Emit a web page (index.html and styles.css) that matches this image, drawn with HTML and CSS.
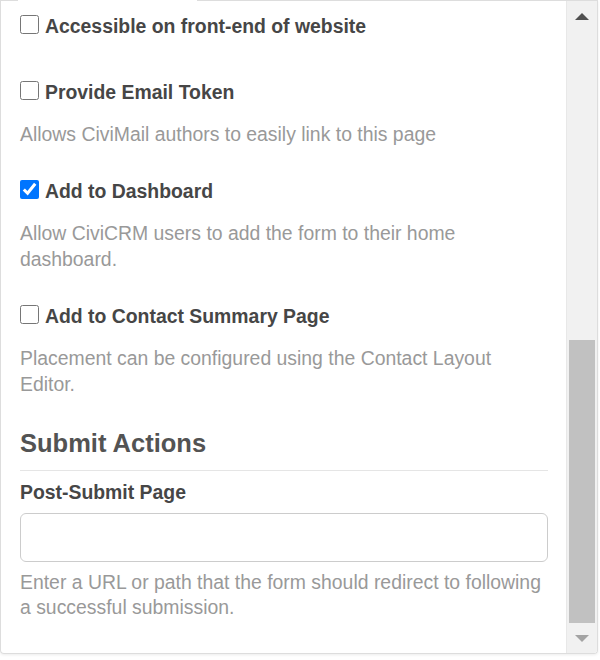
FILE: index.html
```html
<!DOCTYPE html>
<html lang="en">
<head>
<meta charset="utf-8">
<title>Form settings</title>
<link rel="stylesheet" href="styles.css">
</head>
<body>
<div class="panel">
  <div class="top-edge"><span class="edge-a"></span><span class="edge-gap"></span><span class="edge-b"></span></div>
  <div class="panel-body">
    <div class="content">
      <div class="group group-plain">
        <label class="check"><input type="checkbox"> Accessible on front-end of website</label>
      </div>
      <div class="group">
        <label class="check"><input type="checkbox"> Provide Email Token</label>
        <p class="help">Allows CiviMail authors to easily link to this page</p>
      </div>
      <div class="group">
        <label class="check"><input type="checkbox" checked> Add to Dashboard</label>
        <p class="help">Allow CiviCRM users to add the form to their home dashboard.</p>
      </div>
      <div class="group">
        <label class="check"><input type="checkbox"> Add to Contact Summary Page</label>
        <p class="help">Placement can be configured using the Contact Layout Editor.</p>
      </div>
      <h3 class="section-title">Submit Actions</h3>
      <div class="field">
        <label class="field-label" for="redirect">Post-Submit Page</label>
        <input class="text-input" id="redirect" type="text">
        <p class="help help-tight">Enter a URL or path that the form should redirect to following a successful submission.</p>
      </div>
    </div>
    <div class="scrollbar">
      <div class="arrow arrow-up"></div>
      <div class="track">
        <div class="thumb"></div>
      </div>
      <div class="arrow arrow-down"></div>
    </div>
  </div>
</div>
</body>
</html>
```

FILE: styles.css
```css
html, body {
  margin: 0;
  padding: 0;
  background: #ffffff;
}

body {
  font-family: "Liberation Sans", Arial, sans-serif;
  width: 600px;
  height: 660px;
}

.panel {
  width: 598px;
  height: 654px;
  box-sizing: border-box;
  border: 1px solid #dddddd;
  border-top: none;
  border-radius: 0 0 4px 4px;
  box-shadow: 0 1px 3px rgba(0, 0, 0, 0.08);
  display: flex;
  flex-direction: column;
  overflow: hidden;
}

.top-edge {
  display: flex;
  height: 1px;
  flex: 0 0 1px;
}

.edge-a {
  width: 17px;
  background: #dddddd;
}

.edge-gap {
  width: 179px;
}

.edge-b {
  flex: 1;
  background: #dddddd;
}

.panel-body {
  flex: 1;
  display: flex;
  min-height: 0;
}

.content {
  flex: 1;
  padding: 12px 18px 0 19px;
  min-width: 0;
}

.group {
  margin-bottom: 31px;
}

.group-plain {
  margin-bottom: 40px;
}

.check {
  display: flex;
  align-items: center;
  gap: 6px;
  font-size: 19.4px;
  line-height: 26px;
  font-weight: bold;
  color: #464646;
}

.check input {
  width: 19px;
  height: 19px;
  margin: 0 0 4px 0;
  flex: 0 0 auto;
}

.help {
  margin: 16px 0 0 0;
  font-size: 19.4px;
  line-height: 26px;
  color: #999999;
}

.section-title {
  margin: 30px 0 0 0;
  font-size: 25.5px;
  line-height: 30px;
  font-weight: bold;
  color: #535353;
  padding-bottom: 12px;
  border-bottom: 1px solid #e5e5e5;
}

.field {
  margin-top: 8px;
}

.field-label {
  display: block;
  font-size: 19.4px;
  line-height: 26px;
  font-weight: bold;
  color: #464646;
}

.text-input {
  display: block;
  box-sizing: border-box;
  width: 100%;
  height: 49px;
  margin-top: 8px;
  border: 1px solid #cccccc;
  border-radius: 6px;
  background: #ffffff;
  font-family: inherit;
  font-size: 18px;
}

.help-tight {
  margin-top: 8px;
  line-height: 25px;
}

.scrollbar {
  width: 30px;
  flex: 0 0 30px;
  background: #f1f1f1;
  border-left: 1px solid #e8e8e8;
  display: flex;
  flex-direction: column;
  align-items: center;
}

.arrow {
  flex: 0 0 30px;
  width: 30px;
  display: flex;
  align-items: center;
  justify-content: center;
}

.arrow-up::before {
  content: "";
  border-left: 7px solid transparent;
  border-right: 7px solid transparent;
  border-bottom: 7px solid #505050;
}

.arrow-down::before {
  content: "";
  border-left: 7px solid transparent;
  border-right: 7px solid transparent;
  border-top: 7px solid #a3a3a3;
}

.track {
  flex: 1;
  width: 100%;
  display: flex;
  flex-direction: column;
  justify-content: flex-end;
  align-items: center;
}

.thumb {
  width: 26px;
  height: 283px;
  background: #c1c1c1;
}
```
